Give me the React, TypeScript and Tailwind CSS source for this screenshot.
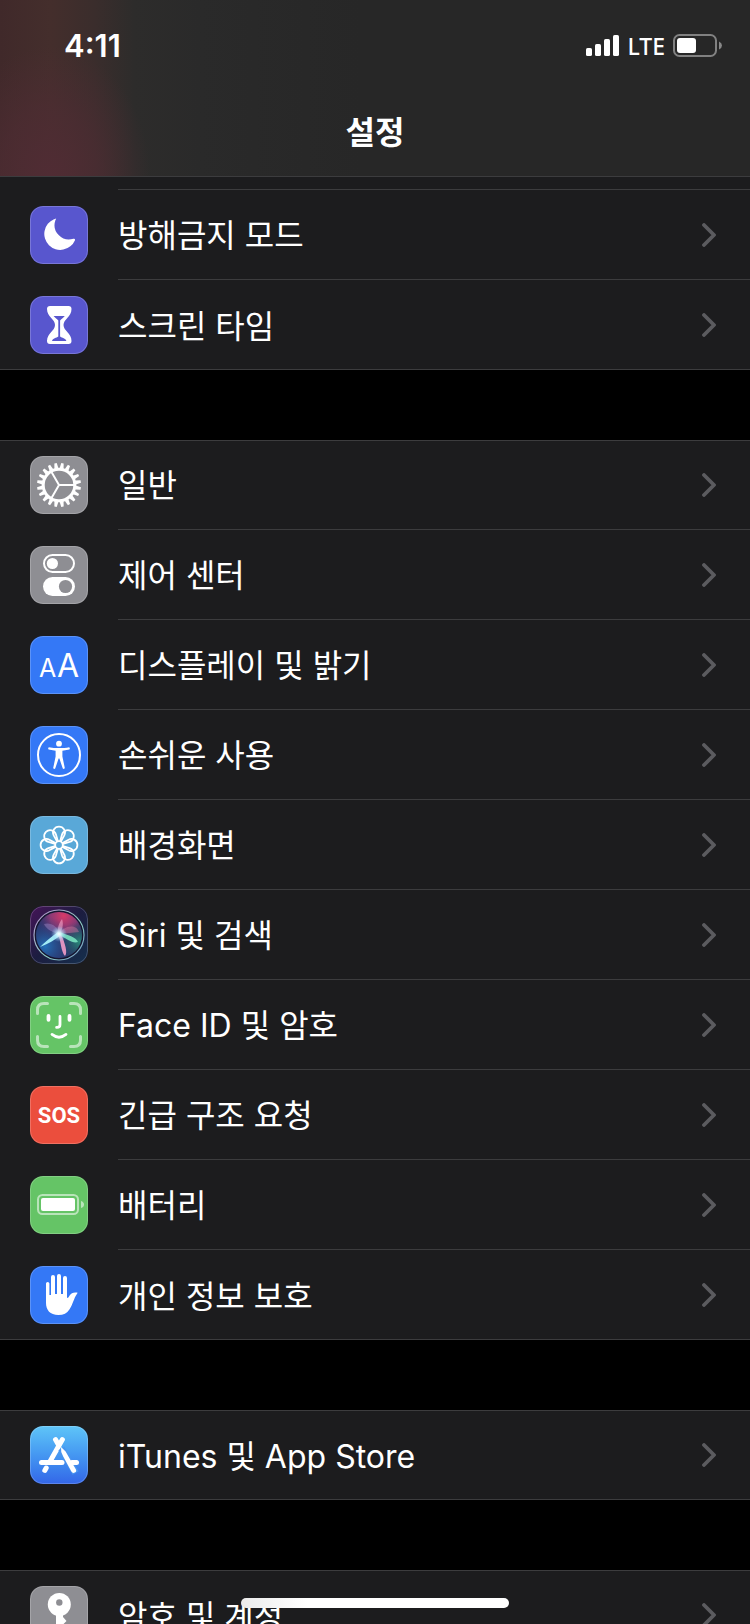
import type { ReactNode } from "react";
import clsx from "clsx";

type Item = {
  label: string;
  icon: ReactNode;
  tile: string;
};

const GEAR_TEETH = Array.from({ length: 20 }, (_, i) => 9 + i * 18);
const PETALS = [0, 45, 90, 135, 180, 225, 270, 315];

function MoonIcon() {
  return (
    <path
      d="M26 12.6 C25.4 13 24.6 13 24 13.2 A16 16 0 1 0 45 34.2 C45.2 33 44.6 32.4 43.4 32.8 A14.5 14.5 0 0 1 25.4 14.2 C25.8 13.4 26.4 12.8 26 12.6Z"
      fill="#fff"
    />
  );
}

function HourglassIcon() {
  return (
    <>
      <path
        d="M20 10 H38.5 Q41.5 10 41.5 13 C41.5 21 33.5 23 33.5 29 C33.5 35 41.5 37 41.5 45 Q41.5 48 38.5 48 H20 Q17 48 17 45 C17 37 25 35 25 29 C25 23 17 21 17 13 Q17 10 20 10Z"
        fill="#fff"
      />
      <path
        d="M23.6 20 H34.8 C33.4 22 31 23 30.1 24.4 V40.4 C32 42 35.6 42 36.4 45 H22 C22.8 42 26.4 42 28.3 40.4 V24.4 C27.4 23 25 22 23.6 20Z"
        fill="#5856ce"
      />
    </>
  );
}

function GearIcon() {
  return (
    <g stroke="#fff" fill="none">
      {GEAR_TEETH.map((angle) => (
        <path
          key={angle}
          d="M27 12.4 L27.8 7 H30.2 L31 12.4Z"
          fill="#fff"
          stroke="none"
          transform={`rotate(${angle} 29 29)`}
        />
      ))}
      <circle cx="29" cy="29" r="15.8" strokeWidth="3" />
      <path d="M29 29 H44 M29 29 L21.5 16 M29 29 L21.5 42" strokeWidth="2" />
    </g>
  );
}

function TogglesIcon() {
  return (
    <>
      <rect x="14" y="9" width="30" height="17" rx="8.5" fill="none" stroke="#fff" strokeWidth="2" />
      <circle cx="22.4" cy="17.5" r="5.6" fill="#fff" />
      <rect x="13" y="31" width="32" height="19" rx="9.5" fill="#fff" />
      <circle cx="35.5" cy="40.5" r="6.6" fill="#8e8e93" />
    </>
  );
}

function TextSizeIcon() {
  return (
    <g fill="#fff" className="font-['Inter'] font-normal">
      <text x="9" y="41" fontSize="25">A</text>
      <text x="27" y="41" fontSize="32">A</text>
    </g>
  );
}

function PersonIcon() {
  return (
    <>
      <circle cx="29" cy="29" r="21" fill="none" stroke="#fff" strokeWidth="2" />
      <circle cx="29" cy="17.7" r="2.9" fill="#fff" />
      <path
        d="M18.8 21.2 C25 22.4 33 22.4 39.2 21.2 Q40.4 22.4 39.4 23.4 L32.4 24.8 V30.4 L34.8 42 Q34 43.6 32.8 42.6 L29.4 32.6 H28.6 L25.2 42.6 Q24 43.6 23.2 42 L25.6 30.4 V24.8 L18.6 23.4 Q17.6 22.4 18.8 21.2Z"
        fill="#fff"
      />
    </>
  );
}

function FlowerIcon() {
  return (
    <g fill="none" stroke="#fff" strokeWidth="1.8">
      {PETALS.map((angle) => (
        <path
          key={angle}
          d="M27.4 26 L23.7 19.4 A6 6 0 1 1 34.3 19.4 L30.6 26"
          transform={`rotate(${angle} 29 29)`}
        />
      ))}
      <circle cx="29" cy="29" r="3.8" />
    </g>
  );
}

function SiriIcon() {
  return (
    <>
      <defs>
        <linearGradient id="siri-bg" x1="0" y1="0" x2="1" y2="1">
          <stop offset="0" stopColor="#451458" />
          <stop offset="0.5" stopColor="#1c1d40" />
          <stop offset="1" stopColor="#15304e" />
        </linearGradient>
        <radialGradient id="siri-pink" cx="0.6" cy="0.08" r="0.6">
          <stop offset="0" stopColor="#d83a68" />
          <stop offset="0.5" stopColor="#a03a78" stopOpacity="0.8" />
          <stop offset="1" stopColor="#4a2a70" stopOpacity="0" />
        </radialGradient>
        <radialGradient id="siri-blue" cx="0.2" cy="0.75" r="0.65">
          <stop offset="0" stopColor="#2370b8" />
          <stop offset="1" stopColor="#28356e" stopOpacity="0" />
        </radialGradient>
        <radialGradient id="siri-green" cx="0.95" cy="0.65" r="0.45">
          <stop offset="0" stopColor="#2a8a78" />
          <stop offset="1" stopColor="#1d5060" stopOpacity="0" />
        </radialGradient>
        <radialGradient id="siri-glow">
          <stop offset="0" stopColor="#fff" />
          <stop offset="0.3" stopColor="#d8f6ff" stopOpacity="0.8" />
          <stop offset="1" stopColor="#7fc7ff" stopOpacity="0" />
        </radialGradient>
        <linearGradient id="siri-ring" x1="0" y1="0" x2="1" y2="1">
          <stop offset="0" stopColor="#b48cc8" />
          <stop offset="0.6" stopColor="#8fd0c4" />
          <stop offset="1" stopColor="#6f8fc0" />
        </linearGradient>
      </defs>
      <rect width="58" height="58" rx="13" fill="url(#siri-bg)" />
      <circle cx="29" cy="29" r="25" fill="#15152f" />
      <circle cx="29" cy="29" r="23" fill="#2c3368" />
      <circle cx="29" cy="29" r="23" fill="url(#siri-pink)" />
      <circle cx="29" cy="29" r="23" fill="url(#siri-blue)" />
      <circle cx="29" cy="29" r="23" fill="url(#siri-green)" />
      <path d="M29 28 C20 26 15 21 14 18 C20 16 28 20 29 28Z" fill="#b8a0e0" fillOpacity="0.35" />
      <path d="M28 28 C27 22 29 17 32 13 C34 18 32 24 30 28Z" fill="#ffb0d4" fillOpacity="0.55" />
      <path d="M29 28 C33 20 46 17 49 26 C43 27 36 27 29 28Z" fill="#e87ca8" fillOpacity="0.4" />
      <path d="M28 26 C21 31 15 36 10 41 C18 38 25 34 31 29Z" fill="#a8f2fa" fillOpacity="0.95" />
      <path d="M28 28 C31 35 31 46 35 50 C38 47 35 37 31 28Z" fill="#f29cc8" fillOpacity="0.9" />
      <path d="M29 26 C38 29 46 31 48 36 C43 38 37 33 29 29Z" fill="#7cebc4" fillOpacity="0.85" />
      <circle cx="29" cy="28" r="8" fill="url(#siri-glow)" />
      <circle cx="29" cy="29" r="25" fill="none" stroke="url(#siri-ring)" strokeWidth="1.2" />
    </>
  );
}

function FaceIcon() {
  return (
    <g fill="none" stroke="#fff" strokeLinecap="round">
      <path
        d="M7.5 17.5 V14 Q7.5 7.5 14 7.5 H17.5 M40.5 7.5 H44 Q50.5 7.5 50.5 14 V17.5 M50.5 40.5 V44 Q50.5 50.5 44 50.5 H40.5 M17.5 50.5 H14 Q7.5 50.5 7.5 44 V40.5"
        strokeWidth="3"
        strokeOpacity="0.55"
      />
      <path d="M18.5 20 V23.8 M39.5 20 V23.8" strokeWidth="3.8" />
      <path d="M30 20.5 V28.5 Q30 31.4 27 31.4 H26.6" strokeWidth="2.8" />
      <path d="M22 38.4 Q29 44 36 38.4" strokeWidth="2.8" />
    </g>
  );
}

function SosIcon() {
  return (
    <text
      x="29"
      y="37"
      textAnchor="middle"
      fontSize="22"
      fill="#fff"
      className="font-['Roboto',sans-serif] font-bold"
    >
      SOS
    </text>
  );
}

function BatteryTileIcon() {
  return (
    <>
      <rect x="8" y="19" width="40" height="19" rx="4.5" fill="none" stroke="#fff" strokeOpacity="0.55" strokeWidth="2" />
      <rect x="11" y="22" width="34" height="13" rx="2" fill="#fff" />
      <path d="M51 25 Q54 26 54 28.5 Q54 31 51 32Z" fill="#fff" fillOpacity="0.55" />
    </>
  );
}

function HandIcon() {
  return (
    <path
      d="M16 17.6 A1.7 1.7 0 0 1 19.4 17.6 V29 H21 V11 A2 2 0 0 1 25 11 V28 H27 V10 A2 2 0 0 1 31 10 V28 H33 V12 A2 2 0 0 1 37 12 V32 Q38.4 32 39.6 29.4 Q42 25.6 47.4 26.6 Q47.8 27.4 46.6 28.4 C44 32 43 38 39.4 43.4 Q36 49 28.4 49 C20 49 16 44 16 37Z"
      fill="#fff"
    />
  );
}

function AppStoreIcon() {
  return (
    <>
      <g stroke="#fff" strokeWidth="5" strokeLinecap="round" fill="none">
        <path d="M11.5 36.5 H32" />
        <path d="M25.5 13.6 L28 18" />
        <path d="M32.4 13.6 L20.4 34.8" />
        <path d="M16.2 42 L14.8 44.4" />
      </g>
      <path d="M31.4 22.6 L45.6 47" stroke="#4a95ef" strokeWidth="7" />
      <path d="M31 21 Q30.4 26 33.2 30.6 L41.4 45.6 A2.5 2.5 0 0 0 45.8 43.2 L35.6 25.6Z" fill="#fff" />
      <path d="M42 36.5 H46.5" stroke="#fff" strokeWidth="5" strokeLinecap="round" />
    </>
  );
}

function KeyIcon() {
  return (
    <>
      <circle cx="29.3" cy="18.5" r="11.5" fill="#fff" />
      <path d="M26 27 H33 V31 L36.5 35 L33 38.5 L36 42 L33 45.5 L29.5 50 L26 46.5Z" fill="#fff" />
      <circle cx="29.3" cy="16.5" r="3.2" fill="#8e8e93" />
    </>
  );
}

const focusItems: Item[] = [
  { label: "방해금지 모드", icon: <MoonIcon />, tile: "bg-[#5856ce]" },
  { label: "스크린 타임", icon: <HourglassIcon />, tile: "bg-[#5856ce]" },
];

const generalItems: Item[] = [
  { label: "일반", icon: <GearIcon />, tile: "bg-[#8e8e93]" },
  { label: "제어 센터", icon: <TogglesIcon />, tile: "bg-[#8e8e93]" },
  { label: "디스플레이 및 밝기", icon: <TextSizeIcon />, tile: "bg-[#3478f6]" },
  { label: "손쉬운 사용", icon: <PersonIcon />, tile: "bg-[#3478f6]" },
  { label: "배경화면", icon: <FlowerIcon />, tile: "bg-[#59a8d8]" },
  { label: "Siri 및 검색", icon: <SiriIcon />, tile: "bg-[#1c1d40]" },
  { label: "Face ID 및 암호", icon: <FaceIcon />, tile: "bg-[#65c466]" },
  { label: "긴급 구조 요청", icon: <SosIcon />, tile: "bg-[#eb4e3d]" },
  { label: "배터리", icon: <BatteryTileIcon />, tile: "bg-[#65c466]" },
  { label: "개인 정보 보호", icon: <HandIcon />, tile: "bg-[#3478f6]" },
];

const storeItems: Item[] = [
  {
    label: "iTunes 및 App Store",
    icon: <AppStoreIcon />,
    tile: "bg-linear-to-b from-[#5fc5f8] to-[#3466e8]",
  },
];

const accountItems: Item[] = [
  { label: "암호 및 계정", icon: <KeyIcon />, tile: "bg-[#8e8e93]" },
];

function Row({ item, last }: { item: Item; last: boolean }) {
  return (
    <li>
      <a href="#" className="flex h-[90px] items-center gap-[30px] pl-[30px]">
        <span
          className={clsx(
            "relative size-[58px] shrink-0 overflow-hidden rounded-[13px]",
            item.tile
          )}
        >
          <svg viewBox="0 0 58 58" className="size-full" aria-hidden="true">
            {item.icon}
          </svg>
          {/* hairline highlight round the tile */}
          <span className="absolute inset-0 rounded-[13px] border border-white/20" />
        </span>
        <span
          className={clsx(
            "flex h-full flex-1 items-center justify-between pr-[34px]",
            !last && "border-b border-[#3c3c3e]"
          )}
        >
          <span className="pt-[3px] text-[32px] leading-10">{item.label}</span>
          <svg
            viewBox="0 0 14 24"
            className="h-6 w-[14px]"
            fill="none"
            stroke="#5b5b5f"
            strokeWidth="3.8"
            strokeLinecap="round"
            strokeLinejoin="round"
            aria-hidden="true"
          >
            <path d="M2 2 L12 12 L2 22" />
          </svg>
        </span>
      </a>
    </li>
  );
}

function Group({ items, top = true }: { items: Item[]; top?: boolean }) {
  return (
    <ul
      className={clsx(
        "bg-[#1c1c1e]",
        top
          ? "shadow-[inset_0_1px_0_#3c3c3e,inset_0_-1px_0_#3c3c3e]"
          : "shadow-[inset_0_-1px_0_#3c3c3e]"
      )}
    >
      {items.map((item, i) => (
        <Row key={item.label} item={item} last={i === items.length - 1} />
      ))}
    </ul>
  );
}

function StatusBar() {
  return (
    <div className="flex h-[91px] items-center justify-between pr-7 pl-16">
      <time className="text-[31px] leading-9 font-semibold">4:11</time>
      <div className="flex items-center gap-2">
        <svg viewBox="0 0 33 21" className="h-[21px] w-[33px]" fill="#fff" aria-hidden="true">
          <rect x="0" y="13" width="6" height="8" rx="1.6" />
          <rect x="9" y="9" width="6" height="12" rx="1.6" />
          <rect x="18" y="4" width="6" height="17" rx="1.6" />
          <rect x="27" y="0" width="6" height="21" rx="1.6" />
        </svg>
        <span className="font-['Noto_Sans',sans-serif] text-[23px] leading-7 font-medium">
          LTE
        </span>
        <svg viewBox="0 0 49 23" className="h-[23px] w-[49px]" aria-hidden="true">
          <rect x="1" y="1" width="42" height="21" rx="5.5" fill="none" stroke="#fff" strokeOpacity="0.42" strokeWidth="2" />
          <rect x="4" y="4" width="19" height="15" rx="3" fill="#fff" />
          <path d="M46 7.5 Q49 9 49 11.5 Q49 14 46 15.5Z" fill="#fff" fillOpacity="0.45" />
        </svg>
      </div>
    </div>
  );
}

export default function App() {
  return (
    <div className="relative flex h-screen flex-col overflow-hidden bg-black font-['Inter','Noto_Sans_CJK_KR',sans-serif] text-white">
      <header className="shrink-0 border-b border-[#3c3c3e] bg-[#272727] bg-[radial-gradient(ellipse_100px_130px_at_50px_176px,#502c34_0%,#502c3499_50%,#502c3400_100%),linear-gradient(90deg,#40292a_0px,#442e2c_50px,#3a2d2c_95px,#2d2c2b_135px,#2a2a2a_200px,#272727_360px)]">
        <StatusBar />
        <h1 className="flex h-[85px] items-start justify-center pt-[22px] text-[32px] leading-10 font-semibold">
          설정
        </h1>
      </header>

      <main className="flex min-h-0 flex-1 flex-col gap-[70px] overflow-hidden">
        <section>
          {/* tail of the row scrolled under the header */}
          <div className="bg-[#1c1c1e] pl-[118px]">
            <div className="h-[13px] border-b border-[#3c3c3e]" />
          </div>
          <Group items={focusItems} top={false} />
        </section>
        <section>
          <Group items={generalItems} />
        </section>
        <section>
          <Group items={storeItems} />
        </section>
        <section>
          <Group items={accountItems} />
        </section>
      </main>

      {/* home indicator */}
      <div className="absolute bottom-4 left-1/2 h-[10px] w-[268px] -translate-x-1/2 rounded-full bg-linear-to-r from-[#ebebeb] to-white to-25%" />
    </div>
  );
}
